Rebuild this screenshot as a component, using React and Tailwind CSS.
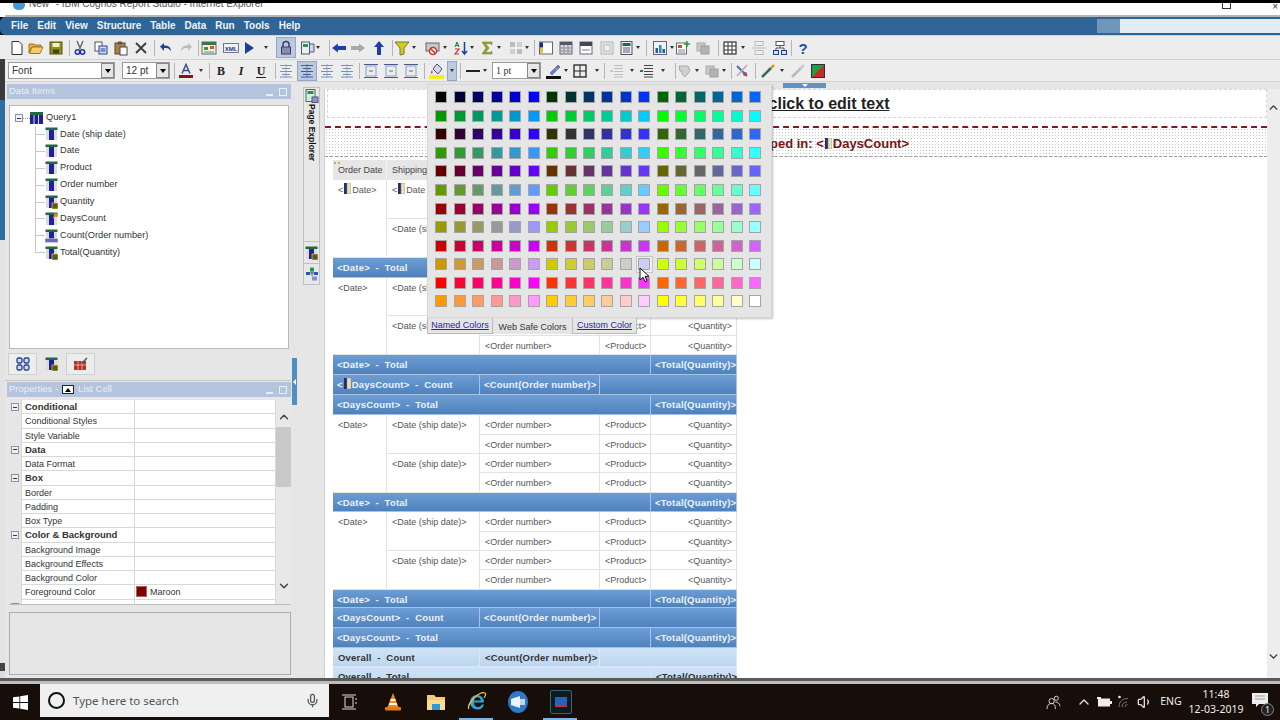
import React from 'react';
import clsx from 'clsx';
import { ChevronUp, ChevronDown, Mic, Volume1 } from 'lucide-react';

const Ico = ({ children }) => (
  <svg width="16" height="16" viewBox="0 0 16 16" className="block">{children}</svg>
);

function T({ className, children }) {
  return <span className={clsx('flex-none w-4 h-4 block', className)}>{children}</span>;
}

function Drop({ className }) {
  return (
    <span className={clsx('flex-none w-[5px] h-4 flex items-center', className)}>
      <span className="block w-0 h-0 border-x-[2.5px] border-x-transparent border-t-[3px] border-t-[#333]" />
    </span>
  );
}

function Sep({ className }) {
  return <span className={clsx('flex-none w-px h-4 bg-[#b5b5b5]', className)} />;
}

function Select({ className, label }) {
  return (
    <div className={clsx('flex-none h-[17px] bg-white border border-[#9a9a9a] flex items-center justify-between pl-[3px] text-[10px] text-[#333]', className)}>
      <span>{label}</span>
      <span className="w-[13px] h-[15px] bg-[#e6e6e6] border border-[#888] flex items-center justify-center">
        <span className="block w-0 h-0 border-x-[3px] border-x-transparent border-t-[4px] border-t-black" />
      </span>
    </div>
  );
}

// toolbar drawings
const New = () => <Ico><path d="M3 1.5h7l3 3v10H3z" fill="#fff" stroke="#333" /></Ico>;
const Open = () => <Ico><path d="M1 13V4h5l1 1h6v2H4l-3 6z" fill="#e0b040" stroke="#a07820" /><path d="M1.5 13.5 4 7h11l-3 6.5z" fill="#f5cf66" stroke="#a07820" /></Ico>;
const Save = () => <Ico><rect x="2" y="2" width="12" height="12" fill="#8f8f1f" stroke="#55550f" /><rect x="4.5" y="3" width="7" height="4" fill="#f4f1c0" /><rect x="5" y="9.5" width="6" height="4" fill="#44440c" /></Ico>;
const Cut = () => <Ico><path d="M5 1l3.5 8M11 1 7.5 9" stroke="#556" strokeWidth="1.2" fill="none" /><circle cx="5.5" cy="12" r="2.2" fill="none" stroke="#223399" strokeWidth="1.5" /><circle cx="10.5" cy="12" r="2.2" fill="none" stroke="#223399" strokeWidth="1.5" /></Ico>;
const Copy = () => <Ico><rect x="2" y="2" width="7" height="9" fill="#fff" stroke="#556" /><rect x="6" y="6" width="8" height="8" fill="#d5def5" stroke="#2a3f9a" /><path d="M7.5 9h5M7.5 11h5" stroke="#2a3f9a" /></Ico>;
const Paste = () => <Ico><rect x="2" y="3" width="10" height="11" fill="#a88440" stroke="#5b4520" /><rect x="5" y="1.5" width="4" height="3" fill="#555" /><rect x="7" y="7" width="7" height="8" fill="#fff" stroke="#445" /></Ico>;
const Del = () => <Ico><path d="M3 3l10 10M13 3 3 13" stroke="#3a3a3a" strokeWidth="1.8" /></Ico>;
const Undo = ({ c = '#24408f' }) => <Ico><path d="M2 6.5 6 3v2.5c4 0 7 1 7 6-1.500-3-3-3.500-7-3.500V11z" fill={c} /></Ico>;
const Redo = () => <Ico><path d="M14 6.500 10 3v2.500c-4 0-7 1-7 6 1.500-3 3-3.500 7-3.500V11z" fill="#bdbdbd" /></Ico>;
const Build = () => <Ico><rect x="1" y="2" width="14" height="12" fill="#f1f1f1" stroke="#55705f" /><rect x="1" y="2" width="14" height="3" fill="#38754f" /><rect x="3" y="7" width="4" height="3" fill="#2d9a3d" /><rect x="9" y="6" width="4" height="3" fill="#cc5a2b" /><path d="M3 12h10" stroke="#778" /></Ico>;
const Xml = () => <Ico><rect x="0.500" y="3.500" width="15" height="9" fill="#eef0fa" stroke="#778" /><text x="8" y="10.500" textAnchor="middle" fontSize="6" fontWeight="700" fill="#24408f" fontFamily="Liberation Sans">XML</text></Ico>;
const Run = () => <Ico><path d="M4 2l9 6-9 6z" fill="#1e3f99" /></Ico>;
const Lock = () => <Ico><path d="M5 7V4.500a3 3 0 0 1 6 0V7" fill="none" stroke="#3c3c72" strokeWidth="1.500" /><rect x="3.500" y="7" width="9" height="7" fill="#8c8cb0" stroke="#3c3c72" /></Ico>;
const Pages = () => <Ico><rect x="1.500" y="2" width="8" height="12" fill="#e8f2ea" stroke="#557" /><rect x="3" y="4" width="5" height="3" fill="#3b8a58" /><path d="M10 4h4v8h-4" fill="#cdd9ef" stroke="#557" /></Ico>;
const Back = () => <Ico><path d="M1 8l6-4.500V6h8v4H7v2.500z" fill="#1c3fa8" /></Ico>;
const Fwd = () => <Ico><path d="M15 8 9 3.500V6H1v4h8v2.500z" fill="#a9a9a9" /></Ico>;
const Up = () => <Ico><path d="M8 1l5 6h-3v8H6V7H3z" fill="#1c3fa8" /></Ico>;
const Filter = () => <Ico><path d="M1 2h14l-5 6v6l-4 1V8z" fill="#d8c820" stroke="#6b7f24" /></Ico>;
const Grouping = () => <Ico><rect x="1" y="3" width="13" height="8" fill="#c8c8c8" stroke="#666" /><circle cx="8" cy="11" r="3.500" fill="#fff" stroke="#c8322a" strokeWidth="1.500" /><path d="M5.500 8.500l5 5" stroke="#c8322a" strokeWidth="1.500" /></Ico>;
const Sort = () => <Ico><path d="M2 7l2-5 2 5M2.800 5.500h2.400" stroke="#1c7a2f" fill="none" /><path d="M2 9h4l-4 5h4" stroke="#c8322a" fill="none" strokeWidth="1.200" /><path d="M11.500 2v12M9 11l2.500 3 2.500-3" stroke="#1c3fa8" strokeWidth="1.500" fill="none" /></Ico>;
const Sum = () => <Ico><path d="M3 2h10v3l-1.500-1.500H6.500L10 8l-3.500 4.500h5L13 11v3H3l4-6z" fill="#9aa32a" stroke="#6d7420" strokeWidth="0.500" /></Ico>;
const GreyGrid = () => <Ico><rect x="2" y="2" width="5" height="5" fill="#bcbcbc" /><rect x="9" y="2" width="5" height="5" fill="#cfcfcf" /><rect x="2" y="9" width="5" height="5" fill="#cfcfcf" /><rect x="9" y="9" width="5" height="5" fill="#bcbcbc" /></Ico>;
const PanelA = () => <Ico><rect x="1.500" y="2" width="13" height="12" fill="#fff" stroke="#667" /><rect x="2" y="2.500" width="3" height="5" fill="#1d2b78" /><rect x="2" y="8" width="3" height="5.500" fill="#d9c64a" /></Ico>;
const Calc = () => <Ico><rect x="2" y="2" width="12" height="12" fill="#d7dae2" stroke="#667" /><rect x="2" y="2" width="12" height="3" fill="#556" /><path d="M6 5v9M10 5v9M2 8h12M2 11h12" stroke="#889" /></Ico>;
const HeaderIco = () => <Ico><rect x="2" y="2" width="12" height="12" fill="#fff" stroke="#667" /><rect x="2" y="2" width="12" height="4" fill="#445" /><rect x="4" y="9" width="8" height="2" fill="#bbc" /></Ico>;
const Disabled = () => <Ico><rect x="2" y="2" width="12" height="12" fill="#e2e2e2" stroke="#b5b5b5" /><rect x="5" y="5" width="6" height="6" fill="#f2f2f2" stroke="#bcbcbc" /></Ico>;
const PageList = () => <Ico><rect x="2" y="1.500" width="11" height="13" fill="#e8edf5" stroke="#556" /><rect x="3.500" y="3" width="8" height="3" fill="#1f6b50" /><path d="M4 8h7M4 10h7M4 12h7" stroke="#667" /></Ico>;
const Chart = () => <Ico><rect x="1.500" y="1.500" width="13" height="13" fill="#eef2fa" stroke="#667" /><rect x="3.500" y="8" width="2.500" height="5" fill="#2a56b0" /><rect x="7" y="5" width="2.500" height="8" fill="#2a8fb0" /><rect x="10.500" y="9" width="2.500" height="4" fill="#2a56b0" /></Ico>;
const PageChart = () => <Ico><rect x="1.500" y="3" width="10" height="11" fill="#fff" stroke="#667" /><rect x="3" y="5" width="4" height="3" fill="#c8502a" /><path d="M12 1v6M9 4h6" stroke="#2d9a3d" strokeWidth="1.500" /><path d="M3 10h7M3 12h7" stroke="#889" /></Ico>;
const GreyStack = () => <Ico><rect x="2" y="3" width="8" height="8" fill="#c8c8c8" stroke="#aaa" /><rect x="6" y="6" width="8" height="8" fill="#b2b2b2" stroke="#a0a0a0" /></Ico>;
const TableI = () => <Ico><rect x="2" y="2" width="12" height="12" fill="#fff" stroke="#333" strokeWidth="1.200" /><path d="M6 2v12M10 2v12M2 6h12M2 10h12" stroke="#333" /></Ico>;
const TreeOff = () => <Ico><rect x="4" y="1.500" width="8" height="4" fill="#f0f0f0" stroke="#bbb" /><path d="M1 8h14" stroke="#bbb" /><rect x="4" y="10.500" width="8" height="4" fill="#f0f0f0" stroke="#bbb" /></Ico>;
const TreeOn = () => <Ico><rect x="4" y="1.500" width="8" height="4" fill="#fff" stroke="#555" /><path d="M8 5.500V8M4 10V8h8v2" stroke="#555" fill="none" /><rect x="1.500" y="10.500" width="5" height="4" fill="#cfe0f5" stroke="#24408f" /><rect x="9.500" y="10.500" width="5" height="4" fill="#cfe0f5" stroke="#24408f" /></Ico>;
const Help = () => <Ico><text x="8" y="14" textAnchor="middle" fontSize="15" fontWeight="700" fill="#1f4aa8" fontFamily="Liberation Sans">?</text></Ico>;

const FontColor = () => <Ico><path d="M4 10.500 8 1.500l4 9M5.500 7.500h5" fill="none" stroke="#404a88" strokeWidth="1.500" /><rect x="1" y="12" width="14" height="3" fill="#8a1010" /></Ico>;
const Letter = ({ c, italic, under }) => (
  <Ico>
    <text x="8" y="12" textAnchor="middle" fontSize="12" fontWeight="700" fontStyle={italic ? 'italic' : 'normal'} fill="#222" fontFamily="Liberation Serif">{c}</text>
    {under && <path d="M3 14.500h10" stroke="#222" />}
  </Ico>
);
const Align = ({ dark }) => (
  <Ico>
    <g stroke={dark ? '#3c5d9a' : '#7a8fbb'}>
      <path d="M2 2.500h12M4 5.500h8M2 8.500h12M4 11.500h8M2 14h12" />
      <path d="M8 1v14" strokeOpacity="0.500" />
    </g>
  </Ico>
);
const Frame = () => <Ico><rect x="3" y="3" width="10" height="10" fill="none" stroke="#8aa0c4" /><path d="M1 1.500h14M1 14.500h14" stroke="#445a88" /><path d="M6 8h4" stroke="#667" /></Ico>;
const Fill = () => <Ico><path d="M8 1l5 5-4 5-5-5z" fill="#d8d8e6" stroke="#4a4a88" /><path d="M3 7c-1 2-1.500 3-.5 3.500S4 9 3 7z" fill="#c8322a" /><rect x="0" y="12" width="15" height="4" fill="#f2ee20" /></Ico>;
const LineI = () => <Ico><path d="M1 8h14" stroke="#222" strokeWidth="2" /></Ico>;
const Pen = () => <Ico><path d="M4 10 12 2l2 2-8 8z" fill="#5f7ae0" stroke="#445" strokeWidth="0.500" /><path d="M9 5l2 2" stroke="#e0c020" /><rect x="0" y="13" width="15" height="3" fill="#111" /></Ico>;
const BorderI = () => <Ico><rect x="2" y="2" width="12" height="12" fill="none" stroke="#222" strokeWidth="1.300" /><path d="M8 2v12M2 8h12" stroke="#222" /></Ico>;
const Indent = ({ dark }) => <Ico><path d="M5 2.500h9M5 5.500h9M5 8.500h9M5 11.500h9M5 14h9" stroke={dark ? '#444' : '#bdbdbd'} /><path d="M1 8h3" stroke={dark ? '#1f7a4f' : '#c5c5c5'} strokeWidth="2" /></Ico>;
const Brush = () => <Ico><path d="M2 3h9l2 5-5 6-3-3V8H3z" fill="#d0d0d0" stroke="#aaa" /></Ico>;
const Tools2 = () => <Ico><path d="M3 3l10 10" stroke="#4a6fb0" strokeWidth="2" /><path d="M13 2 3 13" stroke="#aab" strokeWidth="1.500" /><circle cx="11" cy="11" r="2" fill="#b04a4a" /></Ico>;
const Wand = ({ off }) => <Ico><path d="M2 14 11 5" stroke={off ? '#bbb' : '#3a6a5a'} strokeWidth="2.500" /><path d="M11 5l3-3" stroke={off ? '#ccc' : '#d8a020'} strokeWidth="2.500" /></Ico>;
const GreenRed = () => <Ico><rect x="1.500" y="1.500" width="13" height="13" fill="#22a03a" stroke="#234" /><path d="M2 14 14 2v12z" fill="#c82a2a" /></Ico>;

function ToolbarOne() {
  return (
    <div className="h-[25px] flex-none flex items-center pl-[4px] bg-[#ededed] border-y border-[#d2d2d2]">
      <T><New /></T>
      <T className="ml-[3px]"><Open /></T>
      <T className="ml-[4px]"><Save /></T>
      <Sep className="ml-[5px]" />
      <T className="ml-[2px]"><Cut /></T>
      <T className="ml-[5px]"><Copy /></T>
      <T className="ml-[4px]"><Paste /></T>
      <T className="ml-[4px]"><Del /></T>
      <Sep className="ml-[5px]" />
      <T className="ml-[3px]"><Undo /></T>
      <T className="ml-[4px]"><Redo /></T>
      <Sep className="ml-[4px]" />
      <T className="ml-[2px]"><Build /></T>
      <T className="ml-[6px]"><Xml /></T>
      <T className="ml-[2px]"><Run /></T>
      <Drop className="ml-[7px]" />
      <span className="ml-[7px] flex-none w-5 h-[21px] bg-[#bccadf] border border-[#93a6c4] flex items-center justify-center"><Lock /></span>
      <T className="ml-[4px]"><Pages /></T>
      <Drop />
      <Sep className="ml-[8px]" />
      <T className="ml-[1px]"><Back /></T>
      <T className="ml-[3px]"><Fwd /></T>
      <T className="ml-[5px]"><Up /></T>
      <Sep className="ml-[5px]" />
      <T className="ml-[1px]"><Filter /></T>
      <Drop className="ml-[2px]" />
      <T className="ml-[8px]"><Grouping /></T>
      <Drop className="ml-[2px]" />
      <T className="ml-[5px]"><Sort /></T>
      <Drop className="ml-[1px]" />
      <T className="ml-[4px]"><Sum /></T>
      <Drop className="ml-[2px]" />
      <T className="ml-[6px]"><GreyGrid /></T>
      <Drop className="ml-[1px]" />
      <Sep className="ml-[4px]" />
      <T className="ml-[3px]"><PanelA /></T>
      <T className="ml-[4px]"><Calc /></T>
      <T className="ml-[4px]"><HeaderIco /></T>
      <T className="ml-[5px]"><Disabled /></T>
      <T className="ml-[4px]"><PageList /></T>
      <Drop className="ml-[1px]" />
      <Sep className="ml-[5px]" />
      <T className="ml-[5px]"><Chart /></T>
      <Drop className="ml-[2px]" />
      <T><PageChart /></T>
      <T className="ml-[4px]"><GreyStack /></T>
      <Sep className="ml-[7px]" />
      <T className="ml-[3px]"><TableI /></T>
      <Drop className="ml-[3px]" />
      <T className="ml-[5px]"><TreeOff /></T>
      <T className="ml-[5px]"><TreeOn /></T>
      <Sep className="ml-[3px]" />
      <T className="ml-[3px]"><Help /></T>
    </div>
  );
}

function ToolbarTwo() {
  return (
    <div className="h-[22px] flex-none flex items-center pl-[3px] bg-[#ededed] border-b border-[#d2d2d2]">
      <Select className="w-[107px]" label="Font" />
      <Select className="w-[48px] ml-[7px]" label="12 pt" />
      <Sep className="ml-[4px]" />
      <T className="ml-[3px]"><FontColor /></T>
      <Drop className="ml-[5px]" />
      <Sep className="ml-[5px]" />
      <T className="ml-[3px]"><Letter c="B" /></T>
      <T className="ml-[4px]"><Letter c="I" italic /></T>
      <T className="ml-[4px]"><Letter c="U" under /></T>
      <Sep className="ml-[6px]" />
      <T className="ml-[2px]"><Align /></T>
      <span className="ml-[3px] flex-none w-5 h-5 bg-[#bccadf] border border-[#93a6c4] flex items-center justify-center"><Align dark /></span>
      <T className="ml-[2px]"><Align /></T>
      <T className="ml-[4px]"><Align /></T>
      <Sep className="ml-[4px]" />
      <T className="ml-[3px]"><Frame /></T>
      <T className="ml-[4px]"><Frame /></T>
      <T className="ml-[4px]"><Frame /></T>
      <Sep className="ml-[5px]" />
      <T className="ml-[4px]"><Fill /></T>
      <span className="ml-[2px] flex-none w-[10px] h-5 bg-[#bccadf] border border-[#93a6c4] flex items-center justify-center"><span className="block w-0 h-0 border-x-[2.5px] border-x-transparent border-t-[3px] border-t-[#333]" /></span>
      <Sep className="ml-[3px]" />
      <T className="ml-[4px]"><LineI /></T>
      <Drop className="ml-[2px]" />
      <Select className="w-[49px] ml-[4px] font-['Liberation_Serif']" label="1 pt" />
      <T className="ml-[5px]"><Pen /></T>
      <Drop className="ml-[2px]" />
      <T className="ml-[3px]"><BorderI /></T>
      <Drop className="ml-[7px]" />
      <Sep className="ml-[4px]" />
      <T className="ml-[4px]"><Indent /></T>
      <Drop className="ml-[5px]" />
      <T className="ml-[4px]"><Indent dark /></T>
      <Drop className="ml-[6px]" />
      <Sep className="ml-[9px]" />
      <T className="ml-[1px]"><Brush /></T>
      <Drop className="ml-[2px]" />
      <T className="ml-[4px]"><GreyStack /></T>
      <Drop className="ml-[2px]" />
      <Sep className="ml-[4px]" />
      <T className="ml-[2px]"><Tools2 /></T>
      <Sep className="ml-[5px]" />
      <T className="ml-[4px]"><Wand /></T>
      <Drop className="ml-[4px]" />
      <T className="ml-[5px]"><Wand off /></T>
      <T className="ml-[4px]"><GreenRed /></T>
    </div>
  );
}

function PanelHeader({ children }) {
  return (
    <div className="h-[15px] flex-none ml-[2px] bg-[#b4c4dc] text-[#e9eff7] text-[9.5px] flex items-center pl-[2px] pr-[4px]">
      <span className="flex-1 flex items-center">{children}</span>
      <span className="w-[7px] h-[2px] bg-[#e9eff7] mt-[6px]" />
      <span className="w-[8px] h-[8px] border border-[#e9eff7] ml-[6px]" />
    </div>
  );
}

function QueryIcon({ kind }) {
  return (
    <svg width="13" height="14" viewBox="0 0 13 14" className="block flex-none">
      <rect x="0.500" y="0.500" width="12" height="2.500" fill="#1d6b3f" />
      <rect x="1" y="3" width="11" height="10" fill="#dcdcdc" />
      <rect x="4" y="3" width="5" height="10" fill="#20209c" />
      {kind === 'sum' && <rect x="7" y="8" width="6" height="6" fill="#5a5a20" stroke="#e6d840" strokeWidth="0.700" />}
      {kind === 'calc' && <path d="M8 6l4-4M9 2h3v3" stroke="#e08020" strokeWidth="1.500" fill="none" />}
      {kind === 'count' && <rect x="0" y="9.500" width="13" height="4" fill="#6a6ab8" stroke="#dde" strokeWidth="0.500" />}
    </svg>
  );
}

function QueryRootIcon() {
  return (
    <svg width="13" height="12" viewBox="0 0 13 12" className="block flex-none">
      <rect x="0" y="0" width="13" height="3" fill="#1d6b3f" />
      <rect x="0" y="3" width="13" height="9" fill="#20209c" />
      <path d="M4 3v9M8.500 3v9" stroke="#d8d8e8" />
    </svg>
  );
}

const treeItems = [
  ['Date (ship date)', 'col'],
  ['Date', 'col'],
  ['Product', 'col'],
  ['Order number', 'col'],
  ['Quantity', 'sum'],
  ['DaysCount', 'calc'],
  ['Count(Order number)', 'count'],
  ['Total(Quantity)', 'sum'],
];

function Expander({ className }) {
  return (
    <span className={clsx('flex-none w-[8px] h-[8px] bg-[#eef0f4] border border-[#8a93a5] flex items-center justify-center', className)}>
      <span className="block w-1 h-px bg-[#333]" />
    </span>
  );
}

function DataTree() {
  return (
    <div className="mt-[6px] ml-[4px] w-[280px] h-[244px] flex-none bg-white border border-[#b8b8b8] pt-[4px] text-[9.25px] text-[#333]">
      <div className="h-[16px] flex items-center pl-[5px]">
        <Expander />
        <span className="w-[7px] h-px border-t border-dotted border-[#999]" />
        <QueryRootIcon />
        <span className="ml-[3px]">Query1</span>
      </div>
      <div className="ml-[25px] border-l border-[#c8c8c8] h-[127px]">
        {treeItems.map(([name, kind]) => (
          <div key={name} className="h-[16.9px] flex items-center">
            <span className="w-[9px] h-px bg-[#c8c8c8] flex-none" />
            <QueryIcon kind={kind} />
            <span className="ml-[2px]">{name}</span>
          </div>
        ))}
      </div>
    </div>
  );
}

const properties = [
  ['Conditional', true], ['Conditional Styles'], ['Style Variable'],
  ['Data', true], ['Data Format'],
  ['Box', true], ['Border'], ['Padding'], ['Box Type'],
  ['Color & Background', true], ['Background Image'], ['Background Effects'], ['Background Color'],
  ['Foreground Color', false, 'Maroon'],
  ['Font & Text', true],
];

function PropertyGrid() {
  return (
    <div className="mt-[3px] ml-[4px] h-[205px] flex-none flex overflow-hidden border-b border-[#bdbdbd]">
      <div className="w-[267px] flex-none bg-white">
        {properties.map(([name, section, value]) => (
          <div key={name} className="h-[14.25px] flex text-[9px] text-[#333] leading-[14px] overflow-hidden">
            <span className="w-[12px] flex-none bg-[#e6e6e6] flex items-center justify-center">
              {section && <Expander />}
            </span>
            <span className={clsx('w-[114px] flex-none pl-[3px] border-x border-b border-[#d8d8d8] whitespace-nowrap', section && 'font-bold text-[9.5px]')}>{name}</span>
            <span className="flex-1 border-r border-b border-[#d8d8d8] flex items-center pl-px">
              {value && <span className="w-[11px] h-[11px] bg-[#800000] mr-[3px] border border-[#b06060]" />}
              {value}
            </span>
          </div>
        ))}
      </div>
      <div className="w-[15px] flex-none bg-[#e8e8e8] flex flex-col items-center">
        <ChevronUp size={14} strokeWidth={2.5} className="mt-[10px] text-[#444]" />
        <span className="w-full h-[60px] bg-[#c9c9c9] mt-[3px]" />
        <ChevronDown size={14} strokeWidth={2.5} className="mt-[92px] text-[#444]" />
      </div>
    </div>
  );
}

function LeftPanel() {
  return (
    <div className="w-[286px] flex-none pt-[2px] flex flex-col bg-[#e6e6e6]">
      <PanelHeader>Data Items</PanelHeader>
      <DataTree />
      <div className="mt-[3px] ml-[3px] h-[23px] flex-none flex items-end">
        <span className="w-[29px] h-[22px] bg-[#ededed] border border-[#cfcfcf] flex items-center justify-center">
          <svg width="14" height="14" viewBox="0 0 14 14"><g fill="#cfd8ee" stroke="#24408f" strokeWidth="1.300"><rect x="1" y="1" width="5" height="5" rx="1.500" /><rect x="8" y="1" width="5" height="5" rx="1.500" /><rect x="1" y="8" width="5" height="5" rx="1.500" /><rect x="8" y="8" width="5" height="5" rx="1.500" /></g></svg>
        </span>
        <span className="w-[29px] h-[22px] flex items-center justify-center"><QueryIcon kind="sum" /></span>
        <span className="w-[29px] h-[22px] bg-[#ededed] border border-[#cfcfcf] flex items-center justify-center">
          <svg width="15" height="14" viewBox="0 0 15 14"><rect x="1" y="4" width="12" height="9" fill="#c02a30" /><path d="M5 4v9M9 4v9M1 8h12" stroke="#eec" strokeWidth="0.600" /><path d="M9 6l5-5" stroke="#556" strokeWidth="1.500" /></svg>
        </span>
      </div>
      <div className="mt-[5px] h-px flex-none bg-[#c4c4c4]" />
      <div className="mt-[1px] flex-none flex flex-col">
        <PanelHeader>
          Properties -
          <span className="mx-[4px] w-[12px] h-[9px] bg-white border border-[#222] flex items-center justify-center">
            <span className="block w-0 h-0 border-x-[3px] border-x-transparent border-b-[4px] border-b-black" />
          </span>
          List Cell
        </PanelHeader>
      </div>
      <PropertyGrid />
      <div className="mt-[7px] ml-[4px] h-[63px] flex-none bg-[#e6e6e6] border border-[#adadad]" />
    </div>
  );
}

function Splitter() {
  return (
    <div className="w-[6px] flex-none bg-[#e6e6e6] pt-[276px]">
      <div className="ml-px h-[47px] bg-[#4f8fc0] flex items-center justify-center">
        <span className="block w-0 h-0 border-y-[3px] border-y-transparent border-r-[3px] border-r-white" />
      </div>
    </div>
  );
}

function Rail() {
  return (
    <div className="w-[27px] flex-none bg-[#e6e6e6] pt-[5px] pl-[6px]">
      <div className="w-[17px] h-[198px] bg-[#e8e8e8] border border-[#c0c0c0] flex flex-col items-center">
        <div className="h-[153px] w-full flex flex-col items-center pt-[1px]">
          <svg width="14" height="14" viewBox="0 0 14 14"><rect x="1" y="0.500" width="9" height="12" fill="#d8efe0" stroke="#44705a" /><rect x="2.500" y="2" width="6" height="3" fill="#2f8a5a" /><rect x="7" y="8" width="6" height="5.500" fill="#8f8fe0" stroke="#556" /></svg>
          <span className="mt-[1px] [writing-mode:vertical-rl] text-[8.5px] font-bold text-[#111] whitespace-nowrap">Page Explorer</span>
        </div>
        <div className="h-[22px] w-full border-t border-[#c0c0c0] flex items-center justify-center">
          <QueryIcon kind="sum" />
        </div>
        <div className="h-[21px] w-full border-t border-[#c0c0c0] flex items-center justify-center">
          <svg width="14" height="14" viewBox="0 0 14 14"><path d="M7 3v6M3 6h8" stroke="#556" /><rect x="5" y="0.500" width="4" height="4" fill="#1f9a4a" /><rect x="1" y="5" width="4" height="3" fill="#2a56b0" /><rect x="9" y="5" width="4" height="3" fill="#2a56b0" /><rect x="7" y="9.500" width="5" height="4" fill="#8a8ae0" /></svg>
        </div>
      </div>
    </div>
  );
}

function ItemGlyph() {
  return (
    <svg width="7" height="11" viewBox="0 0 7 11" className="inline-block align-[-1px] mx-px">
      <rect x="0" y="0" width="3" height="11" fill="#2b2b70" />
      <rect x="3" y="0" width="4" height="11" fill="#e9dfb0" stroke="#8a8a8a" strokeWidth="0.500" />
    </svg>
  );
}

const dataCell = 'h-[19.4px] border-r border-b border-[#e2e2e2] pl-[5px] pr-[4px] text-[9px] leading-[20px] text-[#565656] whitespace-nowrap overflow-hidden bg-white';
const blueCell = 'border-r border-b border-[#a7c4e6] pl-[4px] pr-[3px] text-[9.5px] leading-[19px] font-bold tracking-[0.2px] text-[#eef4fb] whitespace-pre bg-linear-to-b from-[#6d9dd5] to-[#4f82bc]';
const paleCell = 'border-r border-b border-[#dbe7f4] pl-[5px] pr-[3px] text-[9.5px] leading-[19px] font-bold tracking-[0.2px] text-[#333] whitespace-pre bg-linear-to-b from-[#cfe3f6] to-[#bbd7f0]';

function DetailRow() {
  return (
    <>
      <div className={dataCell}>&lt;Order number&gt;</div>
      <div className={dataCell}>&lt;Product&gt;</div>
      <div className={clsx(dataCell, 'text-right')}>&lt;Quantity&gt;</div>
    </>
  );
}

function DetailBlock({ marked }) {
  return (
    <>
      <div className={clsx(dataCell, 'row-span-4 h-auto')}>
        {marked ? <>&lt;<ItemGlyph />Date&gt;</> : '<Date>'}
      </div>
      <div className={clsx(dataCell, 'row-span-2 h-auto')}>
        {marked ? <>&lt;<ItemGlyph />Date (ship date)&gt;</> : '<Date (ship date)>'}
      </div>
      <DetailRow />
      <DetailRow />
      <div className={clsx(dataCell, 'row-span-2 h-auto')}>&lt;Date (ship date)&gt;</div>
      <DetailRow />
      <DetailRow />
    </>
  );
}

function TotalRow({ label, className = 'h-5' }) {
  return (
    <>
      <div className={clsx(blueCell, 'col-span-4', className)}>{label}</div>
      <div className={clsx(blueCell, 'text-right', className)}>&lt;Total(Quantity)&gt;</div>
    </>
  );
}

function CountRow({ children }) {
  return (
    <>
      <div className={clsx(blueCell, 'col-span-2 h-5')}>{children}</div>
      <div className={clsx(blueCell, 'h-5')}>&lt;Count(Order number)&gt;</div>
      <div className={clsx(blueCell, 'col-span-2 h-5')} />
    </>
  );
}

function ReportTable() {
  return (
    <div className="ml-[8px] mt-[3px] w-[404px]">
      <div className="relative grid grid-cols-[54px_93px_120px_51px_86px] h-5 text-[9px] text-[#444] bg-[#e6e6e6]">
        <span className="absolute left-px top-[2px] w-[2px] h-[2px] bg-[#d8a84a]" />
        <span className="absolute left-[5px] top-[2px] w-[2px] h-[2px] bg-[#d8a84a]" />
        {['Order Date', 'Shipping Date', 'Order number', 'Product', 'Quantity'].map(h => (
          <div key={h} className="border-r border-[#f4f4f4] pl-[5px] leading-[20px] whitespace-nowrap">{h}</div>
        ))}
      </div>
      <div className="grid grid-cols-[54px_93px_120px_51px_86px] auto-rows-min">
        <DetailBlock marked />
        <TotalRow label="<Date>  -  Total" />
        <DetailBlock />
        <TotalRow label="<Date>  -  Total" />
        <CountRow>&lt;<ItemGlyph />DaysCount&gt;  -  Count</CountRow>
        <TotalRow label="<DaysCount>  -  Total" />
        <DetailBlock />
        <TotalRow label="<Date>  -  Total" className="h-[19.5px]" />
        <DetailBlock />
        <TotalRow label="<Date>  -  Total" className="h-[18.5px]" />
        <CountRow>&lt;DaysCount&gt;  -  Count</CountRow>
        <TotalRow label="<DaysCount>  -  Total" className="h-[19.5px]" />
        <div className={clsx(paleCell, 'col-span-2 h-[19.5px]')}>Overall  -  Count</div>
        <div className={clsx(paleCell, 'h-[19.5px]')}>&lt;Count(Order number)&gt;</div>
        <div className={clsx(paleCell, 'col-span-2 h-[19.5px]')} />
        <div className={clsx(paleCell, 'col-span-4 h-5')}>Overall  -  Total</div>
        <div className={clsx(paleCell, 'h-5 text-right')}>&lt;Total(Quantity)&gt;</div>
      </div>
    </div>
  );
}

function Canvas() {
  return (
    <div className="flex-1 min-w-0 relative flex bg-white border-l border-[#d0d0d0] mt-[7px]">
      <span className="absolute left-[458px] -top-[6px] w-[43px] h-[5px] bg-[#5f93c4] flex items-center justify-center">
        <span className="block w-0 h-0 border-x-[3px] border-x-transparent border-t-[3px] border-t-white" />
      </span>
      <div className="flex-1 min-w-0 h-[589px] overflow-hidden">
        <div className="ml-[2px] h-[29px] border border-dashed border-[#d5d5d5] flex items-center pl-[381px] pt-[1px] whitespace-nowrap">
          <span className="font-bold text-[16px] text-[#222] underline">Double-click to edit text</span>
        </div>
        <div className="mt-[8px] border-t-2 border-dashed border-[#7d1c1c]" />
        <div className="h-[29px] border-b border-dashed border-[#9a9a9a] bg-[radial-gradient(#c4c4c4_0.8px,transparent_0.8px)] bg-size-[3px_3px] flex items-end pb-[4px] pl-[372px] whitespace-nowrap">
          <span className="font-bold text-[13px] text-[#7a1414] leading-[16px]">Orders shipped in: &lt;<ItemGlyph />DaysCount&gt;</span>
        </div>
        <ReportTable />
      </div>
      <div className="w-[13px] flex-none h-[589px] bg-[#ededed] flex flex-col items-center justify-between pt-[12px] pb-[15px]">
        <ChevronUp size={13} strokeWidth={2.5} className="text-[#333]" />
        <ChevronDown size={13} strokeWidth={2.5} className="text-[#333]" />
      </div>
    </div>
  );
}

const steps = ['00', '33', '66', '99', 'CC', 'FF'];

// web safe palette, 18 columns by 12 rows
function safeColors() {
  const out = [];
  for (let r = 0; r < 6; r++) {
    for (const gs of [[0, 1, 2], [3, 4, 5]]) {
      for (const g of gs) {
        for (let b = 0; b < 6; b++) out.push(`#${steps[r]}${steps[g]}${steps[b]}`);
      }
    }
  }
  return out;
}

function ColorPopup() {
  return (
    <div className="absolute left-[427px] top-[84px] w-[345px] z-10">
      <div className="h-[234px] bg-[#e5e5e5] border border-[#d8d8d8] pl-[4px] pt-[3px] shadow-[1px_1px_2px_rgba(0,0,0,0.25)]">
        <div className="grid grid-cols-[repeat(18,18.47px)] auto-rows-[18.55px]">
          {safeColors().map((c, i) => (
            <div key={i} className="flex items-center justify-center">
              {c === '#CCCCFF' ? (
                <span className="w-[17px] h-[17px] bg-[#f0f0f0] border border-[#c4c4c4] flex items-center justify-center">
                  <span className="block w-3 h-3 border border-[#a5a5a5]" style={{ background: c }} />
                </span>
              ) : (
                <span className="block w-3 h-3 border border-[#a5a5a5]" style={{ background: c }} />
              )}
            </div>
          ))}
        </div>
      </div>
      <div className="flex h-4 text-[9px]">
        <span className="w-[66px] bg-[#e5e5e5] border border-t-0 border-[#bbb] text-center leading-[15px] text-[#2626a8] underline">Named Colors</span>
        <span className="w-[79px] bg-[#e5e5e5] text-center leading-[18px] text-[#333]">Web Safe Colors</span>
        <span className="w-[65px] bg-[#e5e5e5] border border-t-0 border-[#bbb] text-center leading-[15px] text-[#2626a8] underline">Custom Color</span>
      </div>
    </div>
  );
}

function Cursor() {
  return (
    <svg width="11" height="16" viewBox="0 0 11 16" className="absolute left-[639px] top-[267px] z-20">
      <path d="M1 1v12l3-2.800 2 4.600 2-.9-2-4.500h4z" fill="#fff" stroke="#111" />
    </svg>
  );
}

function Taskbar() {
  return (
    <div className="h-9 flex-none bg-[#170d09] flex items-center text-white relative font-['Noto_Sans']">
      <svg width="15" height="15" viewBox="0 0 16 16" className="ml-[13px] flex-none"><path d="M0 2.500 6.800 1.500V7.500H0zM7.700 1.400 16 0v7.500H7.700zM0 8.500h6.800v6L0 13.500zM7.700 8.500H16V16l-8.300-1.300z" fill="#fff" /></svg>
      <div className="ml-[12px] w-[289px] h-[33px] self-start bg-[#f0f0f0] flex items-center pl-[8px] text-[#555] text-[11.5px] flex-none">
        <span className="w-[17px] h-[17px] rounded-full border-[2.5px] border-[#111] flex-none" />
        <span className="ml-[8px] flex-1">Type here to search</span>
        <Mic size={15} className="text-[#555] mr-[9px]" />
      </div>
      <svg width="16" height="16" viewBox="0 0 16 16" className="ml-[13px] flex-none"><rect x="3" y="3" width="8" height="10" fill="none" stroke="#ddd" /><path d="M0 1h14M0 15h14M14 4v2M14 8v2" stroke="#ddd" /></svg>
      <svg width="18" height="20" viewBox="0 0 18 20" className="ml-[26px] flex-none"><path d="M9 1l5.500 14h-11z" fill="#f08a1c" /><path d="M6.800 7h4.400l.7 2H6.100zM5.500 11h7l.7 2H4.800z" fill="#f5f5f5" /><rect x="1" y="15" width="16" height="3.500" rx="1" fill="#e8780f" /></svg>
      <svg width="20" height="18" viewBox="0 0 20 18" className="ml-[24px] flex-none"><path d="M1 2h7l2 2h9v13H1z" fill="#f2cc72" /><rect x="1" y="7" width="18" height="10" fill="#f8dc8f" /><rect x="6" y="11" width="8" height="6" fill="#2f9ad8" /></svg>
      <div className="ml-[21px] w-[20px] h-full flex-none flex items-center justify-center relative">
        <svg width="20" height="22" viewBox="0 0 20 22"><path d="M3 11.500c0-4.500 3-7.500 7-7.500s7 3 7 7.500H7c.2 3 1.700 4.500 4 4.500 1.800 0 3-.8 3.800-2.500H17c-1 3.400-3.200 5-6 5-4.600 0-8-3-8-7.500zm4-2h6.800C13.500 7.500 12 6.300 10.300 6.300S7.400 7.500 7 9.500z" fill="#2fa3dc" /><path d="M2 18c-1.500-2 1-7 6-12 4-3.500 8-5 10-4 1 .7.500 3-1 5" fill="none" stroke="#e9c23a" strokeWidth="1.200" /></svg>
      </div>
      <svg width="20" height="22" viewBox="0 0 20 22" className="ml-[21px] flex-none"><ellipse cx="10" cy="11" rx="10" ry="11" fill="#2f79c9" /><path d="M3 8l9-3v12l-9-3z" fill="#eef4fb" /><path d="M12 8h5v6h-5z" fill="#bcd8f2" /></svg>
      <div className="ml-[22px] w-[22px] h-[24px] flex-none bg-[#0e1a22] border border-[#2f6a78] rounded-[2px] flex items-center justify-center">
        <span className="w-[12px] h-[10px] bg-[#2a62b8] border-b-2 border-[#c8322a]" />
      </div>
      <span className="absolute left-[459px] bottom-0 w-[34px] h-[2px] bg-[#7db4e6]" />
      <span className="absolute left-[543px] bottom-0 w-[34px] h-[2px] bg-[#7db4e6]" />

      <div className="ml-auto flex items-center flex-none">
        <svg width="15" height="15" viewBox="0 0 16 16" className="flex-none"><circle cx="6" cy="6.500" r="2.800" fill="none" stroke="#ddd" /><circle cx="11" cy="3.500" r="2.200" fill="none" stroke="#ddd" /><path d="M1 15c0-4 2-6 5-6s4 2 4 6M10 7.500c3 0 4.500 1.500 5 4.500" fill="none" stroke="#ddd" /></svg>
        <ChevronUp size={16} className="ml-[15px] text-[#ddd]" />
        <svg width="15" height="12" viewBox="0 0 15 12" className="ml-[5px] flex-none"><rect x="1" y="2.500" width="12" height="8" fill="#eee" /><rect x="0" y="1" width="4" height="2" fill="#eee" /><rect x="13" y="5" width="2" height="3" fill="#eee" /></svg>
        <svg width="16" height="14" viewBox="0 0 16 14" className="ml-[5px] flex-none"><circle cx="2.500" cy="2" r="1.300" fill="#eee" /><path d="M5 12c0-3 2-5 5-5M8 12c0-1.500 1-2.500 2.500-2.500M2 12C2 6 6 3.500 11 3.500" stroke="#777" fill="none" /></svg>
        <Volume1 size={16} className="ml-[4px] text-[#ddd]" />
        <span className="ml-[6px] text-[10.5px] text-[#eee] w-[24px] text-center">ENG</span>
        <div className="ml-[3px] w-[60px] text-center text-[10.5px] leading-[15px] text-[#eee]">
          <div>11:48</div>
          <div>12-03-2019</div>
        </div>
        <div className="ml-[5px] mr-[5px] w-[24px] h-[28px] relative flex-none">
          <svg width="16" height="15" viewBox="0 0 16 15" className="absolute left-[1px] top-[5px]"><path d="M0 0h16v11H7l-3 3v-3H0z" fill="#eee" /><path d="M3 3h10M3 6h10" stroke="#999" /></svg>
          <span className="absolute right-[1px] bottom-0 w-[13px] h-[13px] rounded-full bg-[#222] border border-[#888] text-[8px] leading-[11px] text-center">1</span>
        </div>
      </div>
    </div>
  );
}

export default function App() {
  return (
    <div className="w-[1280px] h-[720px] relative overflow-hidden flex flex-col font-['Liberation_Sans',sans-serif] bg-black">
      <div className="h-[3px] flex-none bg-black" />
      <div className="flex-1 min-h-0 flex">
        {/* what shows of the window behind, down the left edge */}
        <div className="w-[5px] flex-none flex flex-col">
          <div className="h-[14px] bg-white" />
          <div className="h-[18px] bg-[#2f6596] rounded-l-[5px]" />
          <div className="h-[24px] bg-[#ececec]" />
          <div className="h-[41px] bg-[#3a3a3a]" />
          <div className="h-[140px] bg-[#2f6c9f]" />
          <div className="flex-1 bg-[#e3e3e3]" />
          <div className="h-[8px] bg-[#444]" />
          <div className="h-[7px] bg-[#ddd]" />
        </div>
        <div className="flex-1 min-w-0 flex flex-col">
          <div className="h-[12px] flex-none bg-white overflow-hidden flex items-start pl-2 text-[10px] text-[#555]">
            <span className="block w-[12px] h-[10px] -mt-[3px] rounded-full bg-[#3f9ad6] flex-none" />
            <span className="ml-[4px] -mt-[7px] leading-[16px]">New* - IBM Cognos Report Studio - Internet Explorer</span>
            <span className="ml-auto w-[9px] h-[6px] border border-t-0 border-[#333] mr-[41px] flex-none" />
            <span className="mr-[2px] text-[10px] leading-[7px] text-[#333]">×</span>
          </div>
          <div className="h-[2px] flex-none bg-[#b5b5b5]" />
          <div className="h-[18px] flex-none bg-[#2f6596] flex items-center pl-[6px] pb-px text-[10px] font-bold text-[#f0f4f8]">
            <span>File</span>
            <span className="ml-[9px]">Edit</span>
            <span className="ml-[9px]">View</span>
            <span className="ml-[9px]">Structure</span>
            <span className="ml-[9px]">Table</span>
            <span className="ml-[9px]">Data</span>
            <span className="ml-[9px]">Run</span>
            <span className="ml-[9px]">Tools</span>
            <span className="ml-[9px]">Help</span>
            <span className="ml-auto w-[23px] h-[14px] bg-[#6f95b8] flex-none" />
            <span className="w-[160px] h-[14px] bg-[#e4ecf3] flex-none" />
          </div>
          <ToolbarOne />
          <ToolbarTwo />
          <div className="flex-1 min-h-0 flex bg-[#e6e6e6]">
            <LeftPanel />
            <Splitter />
            <Rail />
            <Canvas />
          </div>
        </div>
      </div>
      <div className="h-[3px] flex-none bg-[#5a5a5a]" />
      <div className="h-[3px] flex-none bg-[#bdbdbd]" />
      <Taskbar />
      <ColorPopup />
      <Cursor />
    </div>
  );
}
